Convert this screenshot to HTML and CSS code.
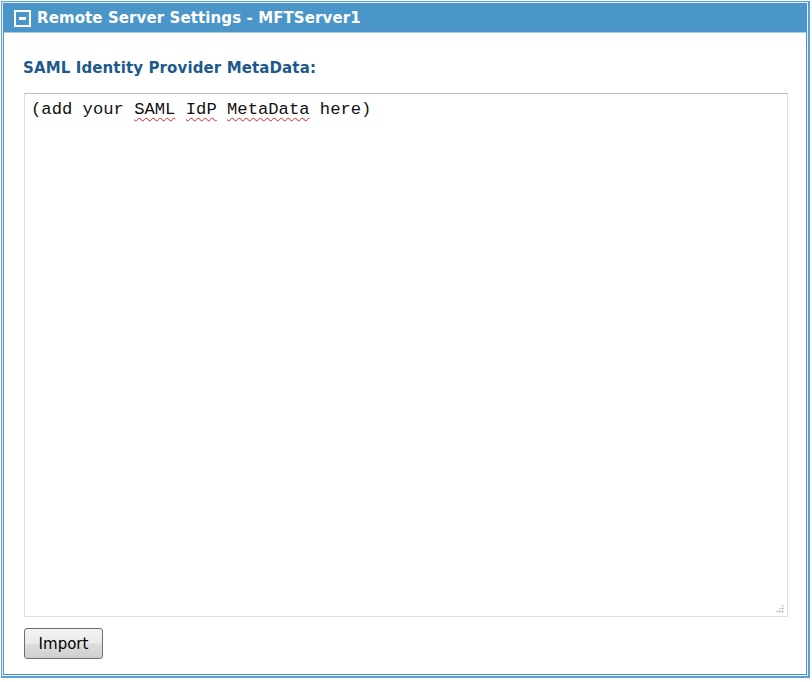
FILE: index.html
```html
<!DOCTYPE html>
<html>
<head>
<meta charset="utf-8">
<link rel="stylesheet" href="styles.css">
</head>
<body>
<div class="frame">
  <div class="box">
    <div class="header">
      <span class="toggle"><span class="minus"></span></span>
      <span class="title">Remote Server Settings - MFTServer1</span>
    </div>
    <div class="content">
      <div class="label">SAML Identity Provider MetaData:</div>
      <div class="textarea">(add your <span class="sp">SAML</span> <span class="sp">IdP</span> <span class="sp">MetaData</span> here)<span class="grip"></span></div>
      <div class="actions"><button class="btn">Import</button></div>
    </div>
  </div>
</div>
</body>
</html>
```
FILE: styles.css
```css
html, body { margin: 0; padding: 0; background: #fff; }
body { width: 812px; height: 682px; overflow: hidden; }
.frame {
  margin: 1px 1px 0 1px;
  width: 804px;
  height: 672px;
  border: 1px solid #5a9fd8;
  border-width: 1px 2px 2px 1px;
  padding: 1px;
  background: #eaf3fb;
}
.box {
  height: 670px;
  border: 1px solid #4a92cf;
  display: flex;
  flex-direction: column;
  background: #fff;
}
.header {
  height: 28px;
  background: #4a96c8;
  border-bottom: 1px solid #a9cbe6;
  display: flex;
  align-items: center;
  padding-left: 10px;
}
.toggle {
  width: 13px;
  height: 13px;
  border: 2px solid #fff;
  display: flex;
  align-items: center;
  justify-content: center;
  margin-right: 6px;
}
.minus { width: 7px; height: 3px; background: #fff; }
.title {
  font-family: "DejaVu Sans", Verdana, sans-serif;
  font-weight: bold;
  font-size: 15px;
  letter-spacing: 0.1px;
  color: #fff;
}
.content {
  flex: 1;
  padding: 26px 18px 0 20px;
  display: flex;
  flex-direction: column;
}
.label {
  font-family: "DejaVu Sans", Verdana, sans-serif;
  font-weight: bold;
  font-size: 15px;
  letter-spacing: 0.12px;
  color: #1c5a8c;
  height: 18px;
  margin-left: -1px;
}
.textarea {
  margin-top: 16px;
  height: 512px;
  border: 1px solid #dcdfe4;
  border-top-color: #b9bcc1;
  padding: 6px 6px 4px;
  font-family: "Liberation Mono", "Courier New", monospace;
  font-size: 17.2px;
  line-height: 20px;
  color: #111;
  position: relative;
}
.sp {
  text-decoration: underline wavy #e02020;
  text-decoration-thickness: 1px;
  text-underline-offset: 3px;
}
.grip {
  position: absolute;
  right: 3px;
  bottom: 3px;
  width: 9px;
  height: 9px;
  background:
    radial-gradient(circle, #b8bcc4 0.9px, transparent 1.2px) 0 0 / 3px 3px;
  clip-path: polygon(100% 0, 100% 100%, 0 100%);
}
.actions { margin-top: 11px; }
.btn {
  width: 79px;
  height: 31px;
  border: 1px solid #707070;
  border-radius: 3px;
  background: linear-gradient(#f3f3f3 0%, #ebebeb 48%, #dddddd 52%, #cfcfcf 100%);
  font-family: "DejaVu Sans", Tahoma, sans-serif;
  font-size: 15px;
  color: #000;
  padding: 0;
}
```
